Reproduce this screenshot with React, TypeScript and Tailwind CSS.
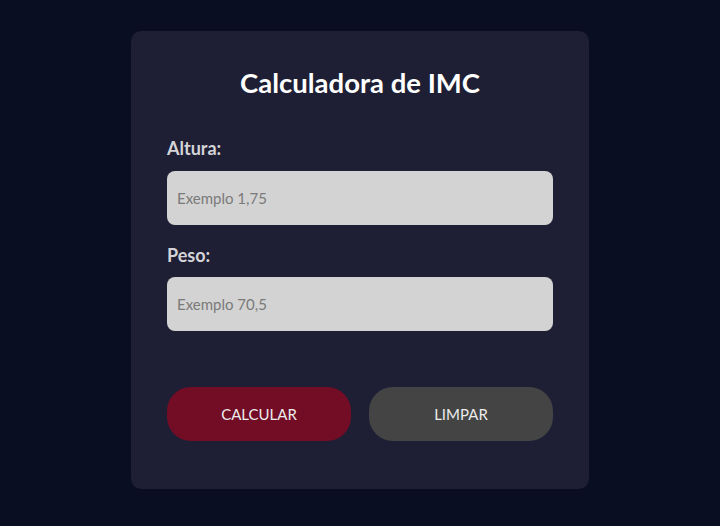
import React, { useState } from "react";

const App = () => {
  const [altura, setAltura] = useState("");
  const [peso, setPeso] = useState("");

  return (
    <div
      className="min-h-[526px] w-full bg-[#0a0e23] flex justify-center pt-[31px]"
      style={{ fontFamily: "Lato, 'Open Sans', sans-serif" }}
    >
      <div className="w-[458px] h-[458px] bg-[#1e1f34] rounded-[10px] px-[36px] pt-[35px] flex flex-col">
        {/* Title */}
        <h1 className="text-[27.5px] leading-[34px] font-bold text-white text-center">
          Calculadora de IMC
        </h1>

        {/* Form */}
        <label className="mt-[37px] text-[18px] leading-[22px] font-bold text-[#d4d4d8]">
          Altura:
        </label>
        <input
          value={altura}
          onChange={(e) => setAltura(e.target.value)}
          placeholder="Exemplo 1,75"
          className="mt-[12px] h-[54px] w-full rounded-[8px] bg-[#d3d3d3] px-[10px] text-[15px] text-gray-800 placeholder:text-[#7a7a7a] outline-none"
        />

        <label className="mt-[19px] text-[18px] leading-[22px] font-bold text-[#d4d4d8]">
          Peso:
        </label>
        <input
          value={peso}
          onChange={(e) => setPeso(e.target.value)}
          placeholder="Exemplo 70,5"
          className="mt-[11px] h-[54px] w-full rounded-[8px] bg-[#d3d3d3] px-[10px] text-[15px] text-gray-800 placeholder:text-[#7a7a7a] outline-none"
        />

        {/* Actions */}
        <div className="mt-[56px] flex gap-[18px]">
          <button className="flex-1 h-[54px] rounded-[24px] bg-[#720d25] text-[15px] text-[#ececec]">
            CALCULAR
          </button>
          <button
            onClick={() => {
              setAltura("");
              setPeso("");
            }}
            className="flex-1 h-[54px] rounded-[24px] bg-[#444444] text-[15px] text-[#ececec]"
          >
            LIMPAR
          </button>
        </div>
      </div>
    </div>
  );
};

export default App;
